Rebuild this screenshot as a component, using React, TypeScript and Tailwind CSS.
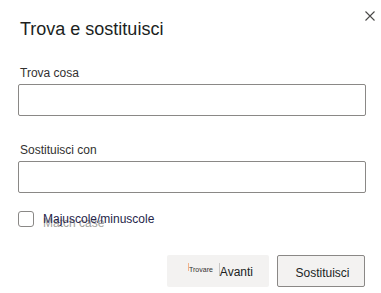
import React from "react";

function CloseIcon() {
  return (
    <svg width="10" height="10" viewBox="0 0 10 10" fill="none">
      <path d="M0.5 0.5 L9.5 9.5 M9.5 0.5 L0.5 9.5" stroke="#4a4948" strokeWidth="1.1" />
    </svg>
  );
}

function Field({ label, top }: { label: string; top: string }) {
  return (
    <div className={top}>
      <div className="pl-[2px] text-[12px] leading-[16px] text-[#323130]">{label}</div>
      <div className="mt-[3px] h-[32px] w-[348px] rounded-[2px] border border-[#8a8886] bg-white" />
    </div>
  );
}

export default function App() {
  return (
    <div
      className="relative h-[293px] w-[381px] overflow-hidden bg-white pl-[18px]"
      style={{ fontFamily: '"Liberation Sans", Arial, sans-serif' }}
    >
      <button className="absolute right-[6px] top-[11px] flex h-[10px] w-[10px] items-center justify-center">
        <CloseIcon />
      </button>

      <h1 className="pl-[2px] pt-[18px] text-[18px] leading-[22px] text-[#201f1e]">Trova e sostituisci</h1>

      <Field label="Trova cosa" top="mt-[25px]" />
      <Field label="Sostituisci con" top="mt-[26px]" />

      <div className="mt-[18px] flex items-center">
        <div className="h-[16px] w-[16px] rounded-[3px] border border-[#8a8886] bg-white" />
        <span className="relative ml-[9px] text-[12px] leading-[16px]">
          <span className="absolute left-0 top-[4px] whitespace-nowrap text-[#a19f9d]">Match case</span>
          <span className="relative text-[#26254a]">Majuscole/minuscole</span>
        </span>
      </div>

      <div className="mr-[16px] mt-[28px] flex justify-end gap-[8px]">
        <button className="flex h-[32px] w-[102px] items-start rounded-[2px] bg-[#f3f2f1] pl-[21px]">
          <span className="mt-[8px] h-[8px] w-px bg-[#f2b48c]" />
          <span className="mt-[11px] text-[7px] leading-[8px] text-[#323130]">Trovare</span>
          <span className="ml-[6px] mt-[8px] h-[13px] w-px bg-[#c8c6c4]" />
          <span className="mt-[10px] text-[12px] leading-[14px] text-[#201f1e]">Avanti</span>
        </button>
        <button className="flex h-[32px] w-[88px] items-start justify-center rounded-[2px] border border-[#8a8886] bg-[#f3f2f1] pl-[3px] pt-[10px]">
          <span className="text-[12px] leading-[14px] text-[#201f1e]">Sostituisci</span>
        </button>
      </div>
    </div>
  );
}
